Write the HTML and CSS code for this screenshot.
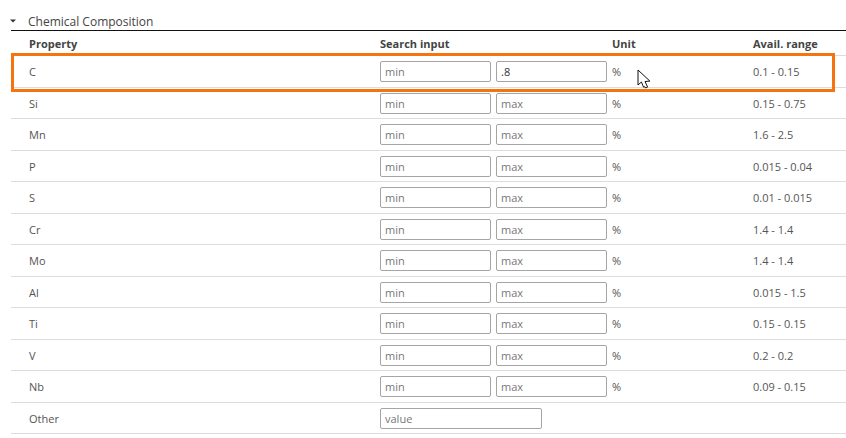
FILE: index.html
```html
<!DOCTYPE html>
<html lang="en">
<head>
    <meta charset="UTF-8">
    <meta name="viewport" content="width=device-width, initial-scale=1.0">
    <title>Chemical Composition</title>
    <link rel="stylesheet" href="styles.css">
</head>
<body>
<div class="section-title">
    <svg class="caret" width="6" height="4" viewBox="0 0 6 4"><path d="M0 0.5h6L3 3.5z" fill="#333"/></svg>
    <span>Chemical Composition</span>
</div>

<div class="comp-table">
    <div class="row head">
        <div>Property</div>
        <div>Search input</div>
        <div>Unit</div>
        <div>Avail. range</div>
    </div>
    <div class="row">
        <div>C</div>
        <div class="inputs"><input class="field" placeholder="min"><input class="field" value=".8"></div>
        <div>%</div>
        <div>0.1 - 0.15</div>
    </div>
    <div class="row">
        <div>Si</div>
        <div class="inputs"><input class="field" placeholder="min"><input class="field" placeholder="max"></div>
        <div>%</div>
        <div>0.15 - 0.75</div>
    </div>
    <div class="row">
        <div>Mn</div>
        <div class="inputs"><input class="field" placeholder="min"><input class="field" placeholder="max"></div>
        <div>%</div>
        <div>1.6 - 2.5</div>
    </div>
    <div class="row">
        <div>P</div>
        <div class="inputs"><input class="field" placeholder="min"><input class="field" placeholder="max"></div>
        <div>%</div>
        <div>0.015 - 0.04</div>
    </div>
    <div class="row">
        <div>S</div>
        <div class="inputs"><input class="field" placeholder="min"><input class="field" placeholder="max"></div>
        <div>%</div>
        <div>0.01 - 0.015</div>
    </div>
    <div class="row">
        <div>Cr</div>
        <div class="inputs"><input class="field" placeholder="min"><input class="field" placeholder="max"></div>
        <div>%</div>
        <div>1.4 - 1.4</div>
    </div>
    <div class="row">
        <div>Mo</div>
        <div class="inputs"><input class="field" placeholder="min"><input class="field" placeholder="max"></div>
        <div>%</div>
        <div>1.4 - 1.4</div>
    </div>
    <div class="row">
        <div>Al</div>
        <div class="inputs"><input class="field" placeholder="min"><input class="field" placeholder="max"></div>
        <div>%</div>
        <div>0.015 - 1.5</div>
    </div>
    <div class="row">
        <div>Ti</div>
        <div class="inputs"><input class="field" placeholder="min"><input class="field" placeholder="max"></div>
        <div>%</div>
        <div>0.15 - 0.15</div>
    </div>
    <div class="row">
        <div>V</div>
        <div class="inputs"><input class="field" placeholder="min"><input class="field" placeholder="max"></div>
        <div>%</div>
        <div>0.2 - 0.2</div>
    </div>
    <div class="row">
        <div>Nb</div>
        <div class="inputs"><input class="field" placeholder="min"><input class="field" placeholder="max"></div>
        <div>%</div>
        <div>0.09 - 0.15</div>
    </div>
    <div class="row">
        <div>Other</div>
        <div class="inputs"><input class="field wide" placeholder="value"></div>
        <div></div>
        <div></div>
    </div>
</div>

<!-- highlight box and mouse pointer sit on top of the table -->
<div class="highlight"></div>
<svg class="pointer" width="15" height="21" viewBox="0 0 15 21">
    <path d="M1 1v15l3.4-3 2.2 5.2 1.2-.5.8 1.3 2-.9-2.6-5.6 4.9-.4z" fill="#fff" stroke="#111" stroke-width="1"/>
</svg>
</body>
</html>
```

FILE: styles.css
```css
body {
    margin: 0;
    background-color: #fff;
    font-family: "Open Sans", "Noto Sans", sans-serif;
    font-size: 11px;
    color: #555;
    height: 438px;
    overflow: hidden;
    position: relative;
}

.section-title {
    display: flex;
    align-items: center;
    height: 30px;
    padding: 12px 0 0 10px;
    box-sizing: border-box;
    font-size: 12px;
    color: #444;
}

.caret {
    margin-right: 12px;
}

.comp-table {
    margin-left: 11px;
    border-top: 1px solid #111;
}

.row {
    display: grid;
    grid-template-columns: 369px 232px 141px 1fr;
    align-items: center;
    height: 31.5px;
    box-sizing: border-box;
    border-bottom: 1px solid #ddd;
}

.row > div:first-child {
    padding-left: 18px;
}

.head {
    height: 25.4px;
    font-weight: 700;
    color: #444;
}

.inputs {
    display: flex;
    gap: 5px;
}

.field {
    width: 111px;
    height: 21px;
    box-sizing: border-box;
    padding: 0 4px;
    border: 1px solid #a5a5a5;
    border-radius: 2px;
    font-family: inherit;
    font-size: 11px;
    color: #333;
    background-color: #fff;
}

.field::placeholder {
    color: #777;
    opacity: 1;
}

.wide {
    width: 162px;
}

.highlight {
    position: absolute;
    left: 11px;
    top: 53px;
    width: 824px;
    height: 39px;
    box-sizing: border-box;
    border: 3px solid #f5740f;
}

.pointer {
    position: absolute;
    left: 637px;
    top: 69px;
}
```
